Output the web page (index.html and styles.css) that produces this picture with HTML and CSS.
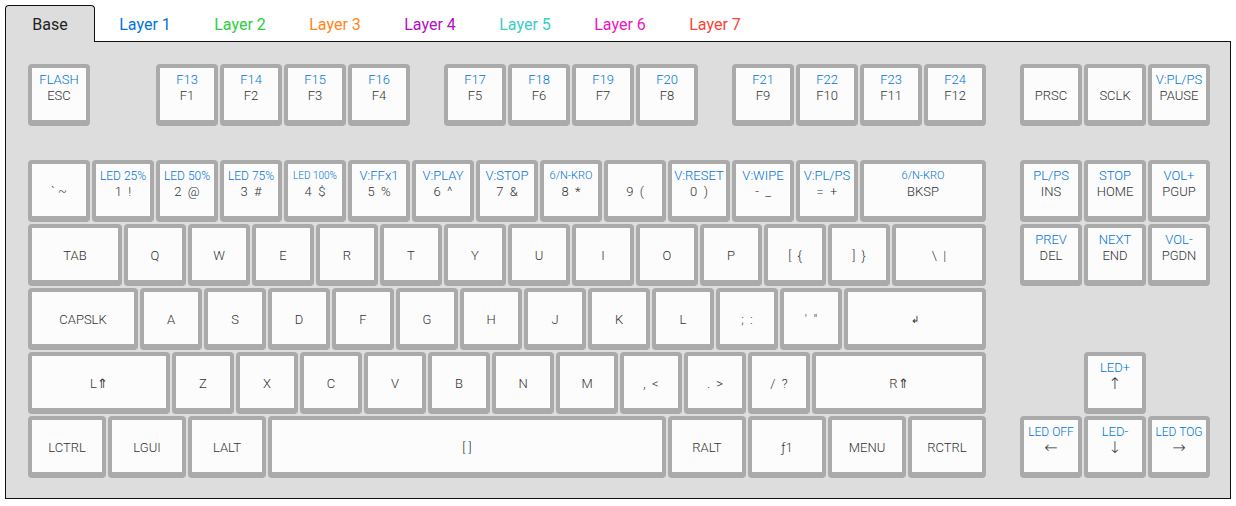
FILE: index.html
```html
<!DOCTYPE html>
<html lang="en">
<head>
<meta charset="utf-8">
<meta name="viewport" content="width=device-width, initial-scale=1">
<title>Keyboard layout</title>
<link rel="stylesheet" href="styles.css">
</head>
<body>
<div class="tabs" role="tablist" aria-label="Layers">
  <button class="tab active" role="tab" aria-selected="true" aria-controls="keyboard">Base</button>
  <button class="tab blue" role="tab" aria-selected="false">Layer 1</button>
  <button class="tab green" role="tab" aria-selected="false">Layer 2</button>
  <button class="tab orange" role="tab" aria-selected="false">Layer 3</button>
  <button class="tab purple" role="tab" aria-selected="false">Layer 4</button>
  <button class="tab teal" role="tab" aria-selected="false">Layer 5</button>
  <button class="tab fuchsia" role="tab" aria-selected="false">Layer 6</button>
  <button class="tab red" role="tab" aria-selected="false">Layer 7</button>
</div>
<main class="keyboard" id="keyboard" role="tabpanel">
  <div class="row function-row">
    <button class="key"><span class="alt">FLASH</span><span class="main">ESC</span></button>
    <span class="space-4"></span>
    <button class="key"><span class="alt">F13</span><span class="main">F1</span></button>
    <button class="key"><span class="alt">F14</span><span class="main">F2</span></button>
    <button class="key"><span class="alt">F15</span><span class="main">F3</span></button>
    <button class="key"><span class="alt">F16</span><span class="main">F4</span></button>
    <span class="space-2"></span>
    <button class="key"><span class="alt">F17</span><span class="main">F5</span></button>
    <button class="key"><span class="alt">F18</span><span class="main">F6</span></button>
    <button class="key"><span class="alt">F19</span><span class="main">F7</span></button>
    <button class="key"><span class="alt">F20</span><span class="main">F8</span></button>
    <span class="space-2"></span>
    <button class="key"><span class="alt">F21</span><span class="main">F9</span></button>
    <button class="key"><span class="alt">F22</span><span class="main">F10</span></button>
    <button class="key"><span class="alt">F23</span><span class="main">F11</span></button>
    <button class="key"><span class="alt">F24</span><span class="main">F12</span></button>
    <span class="space-2"></span>
    <button class="key"><span class="main">PRSC</span></button>
    <button class="key"><span class="main">SCLK</span></button>
    <button class="key"><span class="alt">V:PL/PS</span><span class="main">PAUSE</span></button>
  </div>
  <div class="row">
    <button class="key"><span class="main">` ~</span></button>
    <button class="key"><span class="alt medium">LED 25%</span><span class="main">1  !</span></button>
    <button class="key"><span class="alt medium">LED 50%</span><span class="main">2  @</span></button>
    <button class="key"><span class="alt medium">LED 75%</span><span class="main">3  #</span></button>
    <button class="key"><span class="alt small">LED 100%</span><span class="main">4  $</span></button>
    <button class="key"><span class="alt">V:FFx1</span><span class="main">5  %</span></button>
    <button class="key"><span class="alt">V:PLAY</span><span class="main">6  ^</span></button>
    <button class="key"><span class="alt">V:STOP</span><span class="main">7  &amp;</span></button>
    <button class="key"><span class="alt compact">6/N-KRO</span><span class="main">8  *</span></button>
    <button class="key"><span class="main">9  (</span></button>
    <button class="key"><span class="alt">V:RESET</span><span class="main">0  )</span></button>
    <button class="key"><span class="alt">V:WIPE</span><span class="main">-  _</span></button>
    <button class="key"><span class="alt">V:PL/PS</span><span class="main">=  +</span></button>
    <button class="key span-8"><span class="alt compact">6/N-KRO</span><span class="main">BKSP</span></button>
    <span class="space-2"></span>
    <button class="key"><span class="alt">PL/PS</span><span class="main">INS</span></button>
    <button class="key"><span class="alt">STOP</span><span class="main">HOME</span></button>
    <button class="key"><span class="alt">VOL+</span><span class="main">PGUP</span></button>
  </div>
  <div class="row">
    <button class="key span-6"><span class="main">TAB</span></button>
    <button class="key"><span class="main">Q</span></button>
    <button class="key"><span class="main">W</span></button>
    <button class="key"><span class="main">E</span></button>
    <button class="key"><span class="main">R</span></button>
    <button class="key"><span class="main">T</span></button>
    <button class="key"><span class="main">Y</span></button>
    <button class="key"><span class="main">U</span></button>
    <button class="key"><span class="main">I</span></button>
    <button class="key"><span class="main">O</span></button>
    <button class="key"><span class="main">P</span></button>
    <button class="key"><span class="main">[  {</span></button>
    <button class="key"><span class="main">]  }</span></button>
    <button class="key span-6"><span class="main">\  |</span></button>
    <span class="space-2"></span>
    <button class="key"><span class="alt">PREV</span><span class="main">DEL</span></button>
    <button class="key"><span class="alt">NEXT</span><span class="main">END</span></button>
    <button class="key"><span class="alt">VOL-</span><span class="main">PGDN</span></button>
  </div>
  <div class="row">
    <button class="key span-7"><span class="main">CAPSLK</span></button>
    <button class="key"><span class="main">A</span></button>
    <button class="key"><span class="main">S</span></button>
    <button class="key"><span class="main">D</span></button>
    <button class="key"><span class="main">F</span></button>
    <button class="key"><span class="main">G</span></button>
    <button class="key"><span class="main">H</span></button>
    <button class="key"><span class="main">J</span></button>
    <button class="key"><span class="main">K</span></button>
    <button class="key"><span class="main">L</span></button>
    <button class="key"><span class="main">;  :</span></button>
    <button class="key"><span class="main">'  "</span></button>
    <button class="key span-9"><span class="main enter">↲</span></button>
  </div>
  <div class="row">
    <button class="key span-9"><span class="main">L<span class="shift">⇑</span></span></button>
    <button class="key"><span class="main">Z</span></button>
    <button class="key"><span class="main">X</span></button>
    <button class="key"><span class="main">C</span></button>
    <button class="key"><span class="main">V</span></button>
    <button class="key"><span class="main">B</span></button>
    <button class="key"><span class="main">N</span></button>
    <button class="key"><span class="main">M</span></button>
    <button class="key"><span class="main">,  &lt;</span></button>
    <button class="key"><span class="main">.  &gt;</span></button>
    <button class="key"><span class="main">/  ?</span></button>
    <button class="key span-11"><span class="main">R<span class="shift">⇑</span></span></button>
    <span class="space-6"></span>
    <button class="key"><span class="alt">LED+</span><span class="main arrow">↑</span></button>
  </div>
  <div class="row">
    <button class="key span-5"><span class="main">LCTRL</span></button>
    <button class="key span-5"><span class="main">LGUI</span></button>
    <button class="key span-5"><span class="main">LALT</span></button>
    <button class="key span-25"><span class="main">[ ]</span></button>
    <button class="key span-5"><span class="main">RALT</span></button>
    <button class="key span-5"><span class="main">ƒ1</span></button>
    <button class="key span-5"><span class="main">MENU</span></button>
    <button class="key span-5"><span class="main">RCTRL</span></button>
    <span class="space-2"></span>
    <button class="key"><span class="alt medium">LED OFF</span><span class="main arrow">←</span></button>
    <button class="key"><span class="alt">LED-</span><span class="main arrow">↓</span></button>
    <button class="key"><span class="alt medium">LED TOG</span><span class="main arrow">→</span></button>
  </div>
</main>
</body>
</html>
```
FILE: styles.css
```css
* {
  box-sizing: border-box;
}

body {
  margin: 5px;
  background: #fff;
  color: #222;
  font-family: Roboto, "DejaVu Sans", sans-serif;
}

button {
  margin: 0;
  padding: 0;
  font: inherit;
  color: inherit;
  cursor: pointer;
}

.tabs {
  display: flex;
  gap: 5px;
  margin-bottom: -1px;
}

.tab {
  width: 90px;
  height: 37px;
  padding-top: 2px;
  border: 1px solid transparent;
  border-bottom: 0;
  border-radius: 4px 4px 0 0;
  background: transparent;
  font-size: 16px;
  line-height: 20px;
}

.tab.active {
  position: relative;
  border-color: #111;
  background: #ddd;
}

.blue { color: #0074d9; }
.green { color: #2ecc40; }
.orange { color: #ff851b; }
.purple { color: #b10dc9; }
.teal { color: #39cccc; }
.fuchsia { color: #f012be; }
.red { color: #ff4136; }

.keyboard {
  padding: 22px 18px 18px 22px;
  border: 1px solid #111;
  background: #ddd;
}

/* One standard key spans four columns of a row. */
.row {
  display: grid;
  grid-template-columns: repeat(74, minmax(0, 1fr));
}

.function-row {
  margin-bottom: 32px;
}

.key {
  display: grid;
  grid-column: span 4;
  grid-template-rows: 16px 16px;
  align-content: start;
  justify-content: center;
  justify-items: center;
  height: 62px;
  margin: 0 2px 2px 0;
  padding-top: 4px;
  border: 4px solid #aaa;
  border-bottom-width: 6px;
  border-radius: 4px;
  background: #fcfcfc;
  font-size: 13px;
  font-weight: 300;
  line-height: 16px;
  white-space: pre;
}

.span-5 { grid-column: span 5; }
.span-6 { grid-column: span 6; }
.span-7 { grid-column: span 7; }
.span-8 { grid-column: span 8; }
.span-9 { grid-column: span 9; }
.span-11 { grid-column: span 11; }
.span-25 { grid-column: span 25; }
.space-2 { grid-column: span 2; }
.space-4 { grid-column: span 4; }
.space-6 { grid-column: span 6; }

.alt {
  grid-row: 1;
  color: #0074d9;
}

.main {
  grid-row: 2;
  color: #333;
}

.medium {
  font-size: 12px;
}

.compact {
  font-size: 11px;
}

.small {
  font-size: 10px;
}

.arrow {
  font-family: "DejaVu Sans", sans-serif;
  font-size: 16px;
}

.shift {
  font-family: "Liberation Serif", serif;
  line-height: 1;
}

.enter {
  font-size: 10px;
}
```
